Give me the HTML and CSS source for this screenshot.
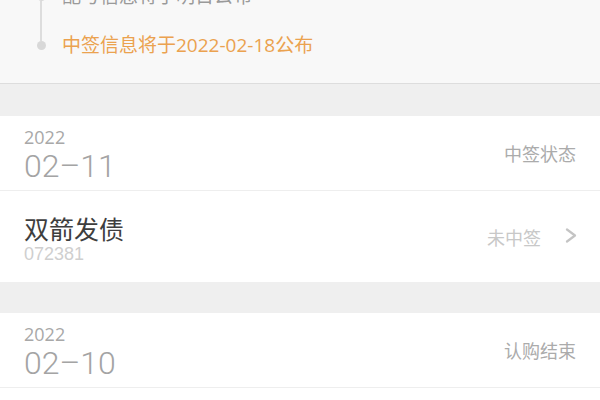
FILE: index.html
```html
<!DOCTYPE html>
<html lang="zh-CN">
<head>
<meta charset="utf-8">
<link rel="stylesheet" href="styles.css">
</head>
<body>
<section class="top">
  <ul class="timeline">
    <li class="tl-item">
      <div class="rail"><span class="seg-top"></span><span class="dot"></span><span class="seg-bottom"></span></div>
      <div class="tl-text">配号信息将于明日公布</div>
    </li>
    <li class="tl-item last">
      <div class="rail"><span class="seg-top"></span><span class="dot"></span><span class="seg-bottom"></span></div>
      <div class="tl-text orange">中签信息将于2022-02-18公布</div>
    </li>
  </ul>
</section>

<section class="card">
  <div class="date-row">
    <div class="date">
      <div class="year">2022</div>
      <div class="day">02–11</div>
    </div>
    <div class="label">中签状态</div>
  </div>
  <div class="item-row">
    <div class="item-info">
      <div class="name">双箭发债</div>
      <div class="code">072381</div>
    </div>
    <div class="status">
      <span class="status-text">未中签</span>
      <svg class="chev" width="12" height="15" viewBox="0 0 12 15"><polyline points="2,1.5 10,7.5 2,13.5" fill="none" stroke="#c4c4c4" stroke-width="2.2" stroke-linecap="round" stroke-linejoin="round"/></svg>
    </div>
  </div>
</section>

<section class="card">
  <div class="date-row">
    <div class="date">
      <div class="year">2022</div>
      <div class="day">02–10</div>
    </div>
    <div class="label">认购结束</div>
  </div>
  <div class="item-row"></div>
</section>
</body>
</html>
```

FILE: styles.css
```css
html, body {
  margin: 0;
  padding: 0;
}
body {
  width: 600px;
  height: 400px;
  overflow: hidden;
  background: #efefef;
  font-family: "Open Sans", "Noto Sans CJK SC", sans-serif;
}
.top {
  background: #f8f8f8;
  height: 83px;
  border-bottom: 1px solid #dddddd;
  overflow: hidden;
}
.timeline {
  list-style: none;
  margin: -17px 0 0 0;
  padding: 0;
}
.tl-item {
  display: flex;
  height: 49px;
}
.rail {
  width: 40px;
  margin-left: 21px;
  display: flex;
  flex-direction: column;
  align-items: center;
}
.seg-top {
  width: 2px;
  height: 9px;
  background: #dddddd;
}
.dot {
  width: 9px;
  height: 9px;
  border-radius: 50%;
  background: #d8d8d8;
}
.seg-bottom {
  width: 2px;
  flex: 1;
  background: #dddddd;
}
.last .seg-bottom {
  background: transparent;
}
.tl-text {
  margin-left: 1px;
  font-size: 19px;
  line-height: 26px;
  color: #9a9a9a;
}
.orange {
  color: #eba24f;
}
.card {
  background: #ffffff;
  margin-top: 32px;
}
.card + .card {
  margin-top: 31px;
}
.date-row {
  height: 74px;
  border-bottom: 1px solid #eeeeee;
  padding: 0 24px;
  display: flex;
  justify-content: space-between;
  align-items: center;
}
.date {
  align-self: flex-start;
  padding-top: 10px;
}
.year {
  font-size: 18px;
  line-height: 22px;
  color: #a8a8a8;
}
.day {
  font-family: "Roboto", "Liberation Sans", sans-serif;
  font-weight: 300;
  font-size: 32px;
  line-height: 37px;
  color: #a4a4a4;
}
.label {
  font-family: "Noto Sans CJK SC", sans-serif;
  font-size: 18px;
  color: #ababab;
}
.item-row {
  height: 91px;
  padding: 0 23px 0 24px;
  display: flex;
  justify-content: space-between;
  align-items: center;
}
.item-info {
  align-self: flex-start;
  padding-top: 22px;
}
.name {
  font-family: "Noto Sans CJK SC", sans-serif;
  font-size: 25px;
  line-height: 30px;
  color: #3e3e3e;
}
.code {
  font-family: "Liberation Sans", sans-serif;
  font-size: 18px;
  line-height: 22px;
  color: #cfcfcf;
}
.status {
  display: flex;
  align-items: center;
}
.status-text {
  font-family: "Noto Sans CJK SC", sans-serif;
  font-size: 18px;
  color: #c8c8c8;
}
.chev {
  margin-left: 24px;
  margin-top: -2px;
}
```
